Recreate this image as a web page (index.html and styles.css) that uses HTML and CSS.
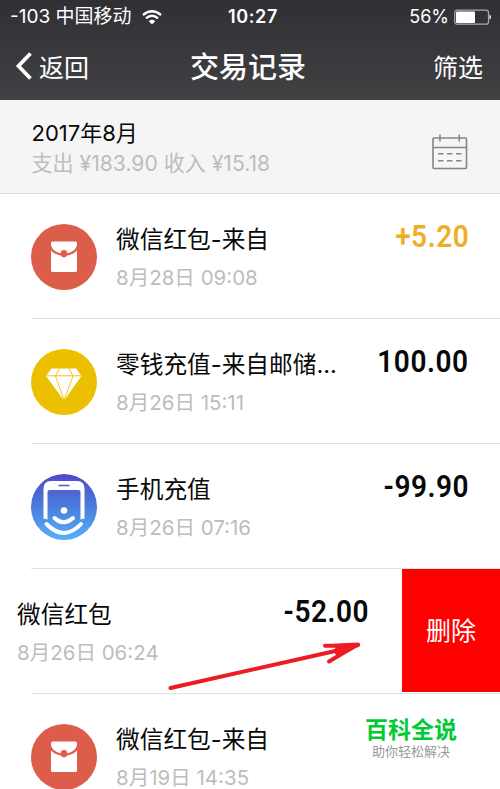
FILE: index.html
```html
<!DOCTYPE html>
<html lang="zh-CN">
<head>
<meta charset="utf-8">
<title>交易记录</title>
<link rel="stylesheet" href="styles.css">
</head>
<body>
<svg class="defs" width="0" height="0" aria-hidden="true">
  <symbol id="packet" viewBox="0 0 66 66">
    <circle cx="33" cy="33" r="33" fill="#dd5d4b"/>
    <path d="M20 19q0-1.500 1.500-1.500h23q1.500 0 1.500 1.500v1c0 5-5 8.500-9.800 9.300a3.200 3.200 0 0 0-6.400 0C25 28.500 20 25 20 20z" fill="#fff"/>
    <path d="M20 26.500c2 2.500 6 4.300 10 5a3.200 3.200 0 0 0 6 0c4-.7 8-2.500 10-5v20q0 1.500-1.500 1.500h-23q-1.500 0-1.500-1.500z" fill="#fff"/>
    <circle cx="33" cy="30" r="2.700" fill="#dd5d4b"/>
  </symbol>
</svg>
<div class="screen">
  <header class="top">
    <div class="status">
      <div class="carrier"><span>-103 中国移动</span>
        <svg width="20" height="15" viewBox="0 0 20 15" fill="none" stroke="#fff" stroke-width="2.300"><path d="M1 5Q10-2.500 19 5M4 8.300q6-5 12 0"/><path d="M6.700 11.200Q10 8.300 13.300 11.200L10 14.500z" fill="#fff" stroke="none"/></svg>
      </div>
      <div class="clock">10:27</div>
      <div class="power"><span>56%</span>
        <svg width="37" height="17" viewBox="0 0 37 17"><rect x=".7" y="1.200" width="33.800" height="14" rx="2.500" fill="none" stroke="#aaa" stroke-width="1.200"/><rect x="2" y="2.500" width="19" height="11.500" rx="1" fill="#fff"/><path d="M35.500 5.500q1.500.5 1.500 2.500t-1.500 2.500z" fill="#fff"/></svg>
      </div>
    </div>
    <nav class="nav">
      <div class="back"><svg width="17" height="28" viewBox="0 0 17 28"><path d="M15.500 1.500L3.500 14l12 12.500" fill="none" stroke="#fff" stroke-width="3.800"/></svg><span>返回</span></div>
      <h1>交易记录</h1>
      <div class="filter">筛选</div>
    </nav>
  </header>
  <section class="summary">
    <div>
      <div class="month">2017年8月</div>
      <div class="totals">支出 ¥183.90 收入 ¥15.18</div>
    </div>
    <svg class="calendar" width="36" height="36" viewBox="0 0 36 36" fill="none" stroke="#858585" stroke-width="1.600"><rect x="1" y="4" width="33.500" height="30.500" rx="1"/><path d="M1 13.500h33.500M8 .5v7M27.300.5v7M6 19.700h5.500M15 19.700h5.500M24 19.700h5.500M6 26.700h5.500M15 26.700h5.500M24 26.700h5.500"/></svg>
  </section>
  <main>
    <article class="row">
      <svg class="icon"><use href="#packet"/></svg>
      <div class="info"><div class="name">微信红包-来自</div><div class="date">8月28日 09:08</div></div>
      <div class="amount income">+5.20</div>
    </article>
    <article class="row">
      <svg class="icon" viewBox="0 0 66 66"><circle cx="33" cy="33" r="33" fill="#ecc000"/><path d="M20.500 19.500h24.800L50.500 27 33 51.500 15 27z" fill="#fff"/><path d="M15 26.800h35.500M28.500 19.500L24.500 27 33 51M38 19.500l4 7.500-9 24" fill="none" stroke="#ecc000" stroke-width=".9"/></svg>
      <div class="info"><div class="name">零钱充值-来自邮储...</div><div class="date">8月26日 15:11</div></div>
      <div class="amount">100.00</div>
    </article>
    <article class="row">
      <svg class="icon" viewBox="0 0 66 66"><defs><linearGradient id="sky" x2="0" y2="1"><stop stop-color="#5148c8"/><stop offset=".5" stop-color="#4b7ddd"/><stop offset="1" stop-color="#56b0fa"/></linearGradient></defs><circle cx="33" cy="33" r="33" fill="url(#sky)"/><path d="M12.500 45V14.500q0-7.500 7.500-7.500h26q7.500 0 7.500 7.500V45q-2-1-4 1V18q0-2-2-2h-29q-2 0-2 2v28q-2-2-4-1z" fill="#fff"/><path d="M28 11.500h10" stroke="#5155ce" stroke-width="1.500" stroke-linecap="round"/><circle cx="33" cy="36.500" r="3.300" fill="#fff"/><path d="M23.500 44q9 8.500 18.500 0M15.500 50q17.500 18 34.500 0" fill="none" stroke="#fff" stroke-width="4" stroke-linecap="round"/></svg>
      <div class="info"><div class="name">手机充值</div><div class="date">8月26日 07:16</div></div>
      <div class="amount">-99.90</div>
    </article>
    <article class="row swiped">
      <div class="info"><div class="name">微信红包</div><div class="date">8月26日 06:24</div></div>
      <div class="amount">-52.00</div>
      <div class="delete">删除</div>
      <svg class="arrow" width="198" height="54" viewBox="0 0 198 54" fill="none" stroke="#ec1c24" stroke-width="4" stroke-linecap="round" stroke-linejoin="round"><path d="M5.500 47L168 10.500 193 4"/><path d="M160 4.800h8L193 3.500Q178 12 164 20.500"/><path d="M172 5L191 4l-19 8z" fill="#ec1c24"/></svg>
    </article>
    <article class="row">
      <svg class="icon"><use href="#packet"/></svg>
      <div class="info"><div class="name">微信红包-来自</div><div class="date">8月19日 14:35</div></div>
      <div class="badge"><strong>百科全说</strong><span>助你轻松解决</span></div>
    </article>
  </main>
</div>
</body>
</html>
```
FILE: styles.css
```css
* { box-sizing: border-box; }
body { margin: 0; background: #fff; font-family: Inter, "Noto Sans CJK SC", sans-serif; color: #080808; }
svg { display: block; flex: none; }
.defs { position: absolute; }
.screen { width: 500px; height: 789px; overflow: hidden; white-space: nowrap; }
.top { height: 100px; background: linear-gradient(#302f34, #414043); color: #fff; }
.status { height: 32px; display: grid; grid-template-columns: 1fr auto 1fr; align-items: center; padding: 1px 9px 0 10px; font-size: 18px; line-height: 32px; }
.carrier, .power { display: flex; align-items: center; gap: 10px; }
.carrier { font-size: 19px; }
.power { justify-content: flex-end; gap: 5px; }
.clock { font-weight: 600; letter-spacing: .6px; padding-left: 5px; }
.nav { height: 68px; display: grid; grid-template-columns: 1fr auto 1fr; align-items: center; padding: 0 17px 0 15px; }
.back { display: flex; align-items: center; gap: 7px; font-size: 25px; }
.filter { text-align: right; font-size: 25px; }
h1 { margin: 3px 2px 0 0; font-size: 29px; font-weight: 500; line-height: 40px; }
.summary { height: 94px; background: #f5f5f5; border-bottom: 1px solid #ddd; display: flex; justify-content: space-between; padding: 18px 32px 0 31.500px; }
.month { font-size: 22px; line-height: 30px; }
.totals { font-size: 21.100px; line-height: 31px; color: #bdbdbd; }
.calendar { margin-top: 16px; }
.row { position: relative; height: 125px; display: flex; align-items: flex-start; margin-left: 31px; padding: 30px 32px 0 0; border-bottom: 1px solid #e2e2e2; }
.icon { width: 66px; height: 66px; margin: -.5px 19px 0 0; }
.info { flex: 1; }
.name { font-size: 23.700px; line-height: 32px; }
.date { font-size: 20.500px; line-height: 30px; margin-top: 7px; color: #bdbdbd; }
.amount { font-family: Roboto, sans-serif; font-weight: 600; font-size: 31.500px; line-height: 38px; margin: -6px -1px 0 0; letter-spacing: .6px; transform: scaleX(.89); transform-origin: right; }
.income { color: #efae25; }
.swiped { padding-right: 0; }
.swiped .info { margin-left: -14px; }
.delete { width: 98px; height: 123px; margin: -30px 0 0 34px; background: #f00; color: #fff; font-size: 25px; line-height: 125px; text-align: center; }
.arrow { position: absolute; left: 134px; top: 72px; }
.badge { display: flex; flex-direction: column; align-items: center; margin: -8px 11px 0 0; }
.badge strong { color: #00cb35; font-size: 23px; line-height: 29px; font-weight: 700; }
.badge span { color: #999; font-size: 13px; line-height: 13px; }
```
